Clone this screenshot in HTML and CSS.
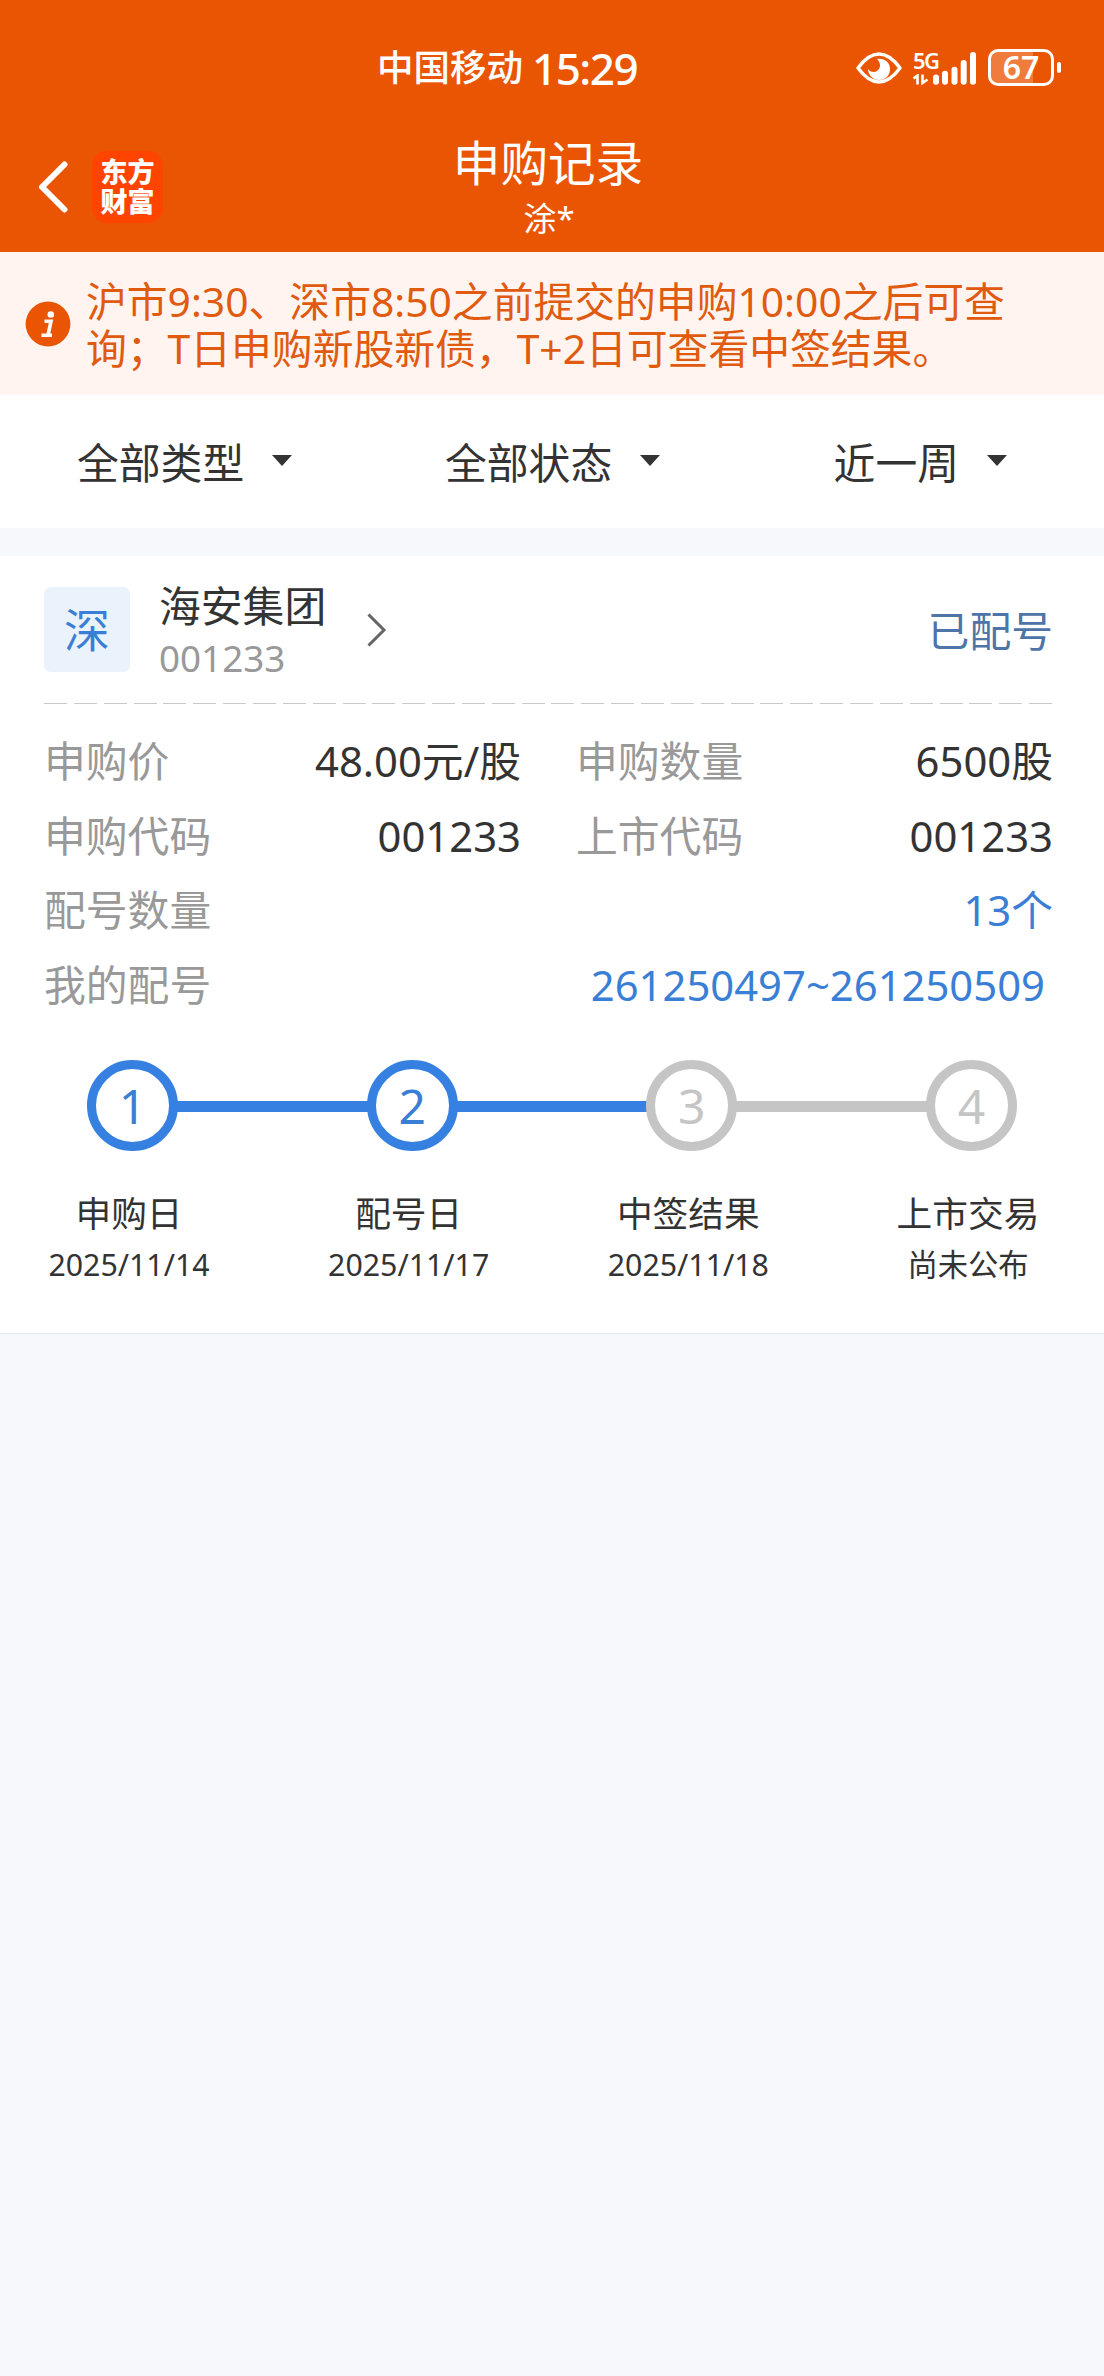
FILE: index.html
```html
<!DOCTYPE html>
<html lang="zh-CN">
<head>
    <meta charset="UTF-8">
    <meta name="viewport" content="width=device-width, initial-scale=1.0">
    <title>申购记录</title>
    <link rel="stylesheet" href="styles.css">
</head>
<body>
    <header class="header">
        <div class="status-bar">
            <span class="carrier">中国移动</span>
            <span class="time">15:29</span>
            <div class="status-icons">
                <svg class="eye" width="46" height="32" viewBox="0 0 46 32">
                    <path d="M2 16 C10 5 17 2 23 2 C29 2 36 5 44 16 C36 27 29 30 23 30 C17 30 10 27 2 16 Z" fill="none" stroke="#fff" stroke-width="3.4" stroke-linejoin="round"/>
                    <path d="M21 7 C29 6 34 11 34 17 C34 24 29 28 23 28 C17 28 12 23 12 17 C14 20 18 21 21 19 C25 16 25 11 21 7 Z" fill="#fff"/>
                </svg>
                <div class="signal">
                    <div class="network">
                        <span>5G</span>
                        <svg width="16" height="11" viewBox="0 0 16 11">
                            <path d="M0.5 4.5 L4.5 1.5 V10.5" fill="none" stroke="#fff" stroke-width="2.6"/>
                            <path d="M9.5 0.5 V9 L14.5 5.5" fill="none" stroke="#fff" stroke-width="2.6"/>
                        </svg>
                    </div>
                    <svg class="bars" width="44" height="34" viewBox="0 0 44 34" stroke="#fff" stroke-width="6" stroke-linecap="round">
                        <path d="M4 26.5 V30.8 M13 22.8 V30.8 M22.5 18.8 V30.8 M31.7 12 V30.8 M41 4 V30.8"/>
                    </svg>
                </div>
                <div class="battery"><span>67</span></div>
            </div>
        </div>
        <div class="title-bar">
            <svg class="back" width="30" height="52" viewBox="0 0 30 52">
                <path d="M26.5 3.5 L4 26 L26.5 48.5" fill="none" stroke="#fff" stroke-width="6" stroke-linecap="round" stroke-linejoin="round"/>
            </svg>
            <div class="logo">东方<br>财富</div>
            <div class="title">
                <h1>申购记录</h1>
                <p>涂*</p>
            </div>
        </div>
    </header>

    <div class="notice">
        <svg class="notice-icon" width="46" height="46" viewBox="0 0 46 46">
            <circle cx="23" cy="23" r="22.4" fill="#ea5504"/>
            <circle cx="25.8" cy="13.5" r="3.3" fill="#fff"/>
            <path d="M19.5 20.3 H26 L23 34 M16.5 34.2 H27" fill="none" stroke="#fff" stroke-width="3.6"/>
        </svg>
        <p>沪市9:30、深市8:50之前提交的申购10:00之后可查<br>询；T日申购新股新债，T+2日可查看中签结果。</p>
    </div>

    <div class="filters">
        <div class="filter">全部类型<i class="arrow"></i></div>
        <div class="filter">全部状态<i class="arrow"></i></div>
        <div class="filter last">近一周<i class="arrow"></i></div>
    </div>

    <div class="card">
        <div class="card-head">
            <div class="market">深</div>
            <div class="stock">
                <div class="stock-name">海安集团</div>
                <div class="stock-code">001233</div>
            </div>
            <svg class="more" width="20" height="34" viewBox="0 0 20 34">
                <path d="M1.5 1.5 L17 17 L1.5 32.5" fill="none" stroke="#666" stroke-width="3"/>
            </svg>
            <div class="state">已配号</div>
        </div>

        <div class="divider"></div>

        <div class="details">
            <div class="row">
                <div class="cell"><span class="label">申购价</span><span>48.00元/股</span></div>
                <div class="cell"><span class="label">申购数量</span><span>6500股</span></div>
            </div>
            <div class="row">
                <div class="cell"><span class="label">申购代码</span><span>001233</span></div>
                <div class="cell"><span class="label">上市代码</span><span>001233</span></div>
            </div>
            <div class="row">
                <span class="label">配号数量</span><span class="link">13个</span>
            </div>
            <div class="row">
                <span class="label">我的配号</span><span class="link numbers">261250497~261250509</span>
            </div>
        </div>

        <div class="steps">
            <span class="dot done">1</span>
            <span class="line done"></span>
            <span class="dot done">2</span>
            <span class="line done"></span>
            <span class="dot">3</span>
            <span class="line"></span>
            <span class="dot">4</span>
        </div>
        <div class="step-labels">
            <div class="step-label"><strong>申购日</strong>2025/11/14</div>
            <div class="step-label"><strong>配号日</strong>2025/11/17</div>
            <div class="step-label"><strong>中签结果</strong>2025/11/18</div>
            <div class="step-label"><strong>上市交易</strong>尚未公布</div>
        </div>
    </div>
</body>
</html>
```

FILE: styles.css
```css
:root {
    --orange: #ea5504;
    --blue: #3580e0;
    --grey: #999;
    --line-grey: #c5c5c5;
    --text: #333;
}

* {
    box-sizing: border-box;
}

body {
    margin: 0;
    background: #f6f8fb;
    color: var(--text);
    font-family: "Noto Sans", "Noto Sans CJK SC", sans-serif;
    font-size: 41.8px;
    line-height: 1;
}

h1, p {
    margin: 0;
    font-weight: 400;
}

.header {
    height: 252px;
    background: var(--orange);
    color: #fff;
}

/* status bar */
.status-bar {
    display: flex;
    align-items: center;
    height: 135px;
    padding-left: 377px;
}

.carrier {
    font-size: 36.5px;
    font-weight: 500;
}

.time {
    margin-left: 9px;
    font-size: 44px;
    font-weight: 500;
    letter-spacing: -1.5px;
}

.status-icons {
    display: flex;
    align-items: center;
    margin-left: auto;
    padding-right: 50px;
}

.signal {
    display: flex;
    margin: 0 12px 0 11px;
}

.network {
    display: flex;
    flex-direction: column;
    justify-content: space-between;
    width: 19px;
    height: 34px;
    font-size: 22px;
    font-weight: 600;
    line-height: 18px;
    letter-spacing: -1.5px;
}

.battery {
    position: relative;
    width: 66px;
    height: 37px;
    border: 3px solid #fff;
    border-radius: 10px;
    background: linear-gradient(to right, #ef7b3c 42px, transparent 42px);
    font-size: 32px;
    font-weight: 600;
    line-height: 30px;
    text-align: center;
}

.battery::after {
    content: "";
    position: absolute;
    top: 10px;
    right: -10px;
    width: 4px;
    height: 11px;
    border-radius: 2px;
    background: #fff;
}

/* title bar */
.title-bar {
    position: relative;
    display: flex;
    align-items: center;
    height: 103px;
    padding-left: 38px;
}

.logo {
    width: 71px;
    height: 72px;
    margin-left: 24px;
    padding-top: 6px;
    border-radius: 15px;
    background: #ff4400;
    font-size: 27px;
    font-weight: 900;
    line-height: 30px;
    text-align: center;
}

.title {
    position: absolute;
    top: 0;
    left: 50%;
    transform: translateX(-50%);
    margin-left: -4px;
    text-align: center;
}

.title h1 {
    font-size: 47.6px;
    line-height: 55px;
}

.title p {
    padding-left: 2px;
    font-size: 33px;
    line-height: 58px;
}

/* notice */
.notice {
    display: flex;
    align-items: center;
    height: 143px;
    padding-left: 25px;
    background: #fff4ef;
    color: #e05a10;
    font-size: 40.8px;
    line-height: 46.3px;
}

.notice p {
    margin-left: 15px;
    padding-top: 2px;
    white-space: nowrap;
}

/* filters */
.filters {
    display: flex;
    height: 133px;
    padding: 2px 97px 0 77px;
    background: #fff;
}

.filter {
    display: flex;
    align-items: center;
    width: 368px;
}

.filter.last {
    width: auto;
    margin-left: auto;
}

.arrow {
    margin-left: 28px;
    margin-bottom: 5px;
    border: 10px solid transparent;
    border-top: 11px solid var(--text);
    border-bottom: 0;
}

/* card */
.card {
    height: 778px;
    margin-top: 28px;
    padding: 0 51px 0 44px;
    border-bottom: 1px solid #e9eaec;
    background: #fff;
}

.card-head {
    display: flex;
    align-items: center;
    height: 147px;
}

.market {
    width: 86px;
    height: 85px;
    border-radius: 7px;
    background: #eaf2fc;
    color: #3a7fd5;
    font-size: 46px;
    line-height: 85px;
    text-align: center;
}

.stock {
    margin-left: 29px;
    padding-top: 2px;
}

.stock-name {
    line-height: 54px;
}

.stock-code {
    color: var(--grey);
    font-size: 36.8px;
    line-height: 50px;
}

.more {
    margin-left: 41px;
}

.state {
    margin-left: auto;
    padding-top: 2px;
    color: #4f74a8;
}

.divider {
    height: 1px;
    background: repeating-linear-gradient(to right, #c8c8c8 0 23px, transparent 23px 29.85px);
}

.details {
    padding-top: 20px;
}

.row {
    display: flex;
    align-items: center;
    justify-content: space-between;
    height: 74.5px;
}

.cell {
    display: flex;
    justify-content: space-between;
    width: 477px;
}

.label {
    color: var(--grey);
}

.link {
    color: #3a7fd5;
}

.numbers {
    padding-right: 8px;
}

/* steps */
.steps {
    display: flex;
    align-items: center;
    margin: 38px 36px 0 43px;
}

.dot {
    width: 91px;
    height: 91px;
    border: 9px solid var(--line-grey);
    border-radius: 50%;
    color: var(--line-grey);
    font-size: 48px;
    line-height: 73px;
    text-align: center;
}

.line {
    flex: 1;
    height: 11px;
    margin: 2px -1px 0;
    background: var(--line-grey);
}

.dot.done {
    border-color: var(--blue);
    color: #3a7fd5;
}

.line.done {
    background: var(--blue);
}

.step-labels {
    display: flex;
    justify-content: space-between;
    margin-top: 37px;
}

.step-label {
    width: 170px;
    font-size: 30.3px;
    line-height: 51px;
    text-align: center;
    white-space: nowrap;
}

.step-label strong {
    display: block;
    font-size: 35.7px;
    font-weight: 400;
}
```
